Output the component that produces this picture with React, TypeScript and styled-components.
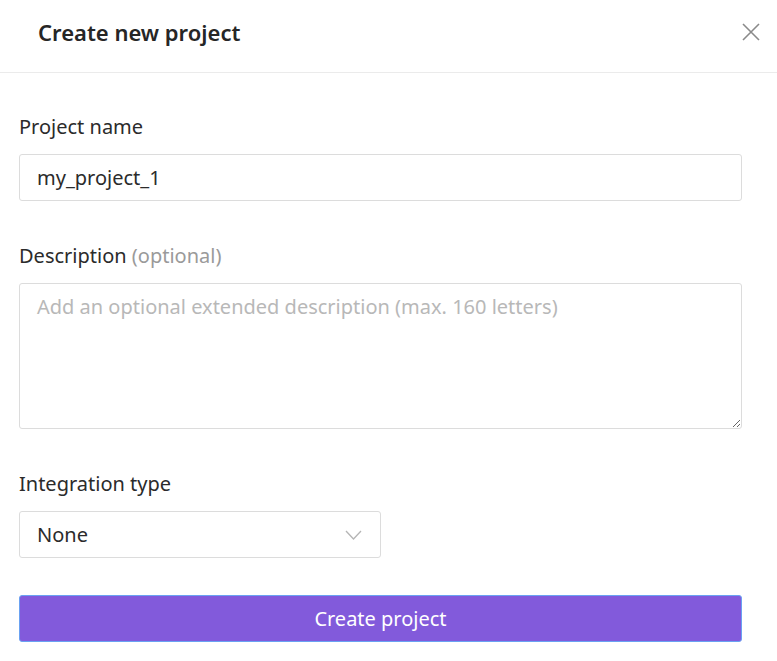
import React from "react";
import styled, { createGlobalStyle } from "styled-components";

const Global = createGlobalStyle`
  html, body { margin: 0; padding: 0; background: #fff; }
  body { font-family: "Noto Sans", "Open Sans", sans-serif; color: #2b2b2b; }
  * { box-sizing: border-box; }
`;

const Dialog = styled.div`
  width: 777px;
  background: #fff;
`;

const Header = styled.header`
  height: 73px;
  display: flex;
  align-items: center;
  justify-content: space-between;
  padding: 0 17px 8px 38px;
  border-bottom: 1px solid #ebebeb;
`;

const Title = styled.h2`
  margin: 0;
  font-size: 22px;
  font-weight: 600;
  color: #262626;
`;

const CloseButton = styled.button`
  border: none;
  background: none;
  padding: 0;
  width: 18px;
  height: 18px;
  cursor: pointer;
  display: flex;
`;

const Body = styled.div`
  padding: 40px 35px 20px 19px;
  display: flex;
  flex-direction: column;
`;

const Field = styled.div<{ $gap: number }>`
  display: flex;
  flex-direction: column;
  margin-bottom: ${(p) => p.$gap}px;
`;

const Label = styled.label`
  font-size: 20px;
  line-height: 28px;
  color: #2b2b2b;
  margin-bottom: 13px;
`;

const Optional = styled.span`
  color: #9a9a9a;
`;

const boxBase = `
  border: 1px solid #dcdcdc;
  border-radius: 3px;
  font-family: "Noto Sans", "Open Sans", sans-serif;
  font-size: 20px;
  color: #2b2b2b;
  background: #fff;
  outline: none;
`;

const TextInput = styled.input`
  ${boxBase}
  height: 47px;
  width: 100%;
  padding: 0 17px;
`;

const TextArea = styled.textarea`
  ${boxBase}
  height: 146px;
  width: 100%;
  padding: 9px 17px;
  resize: vertical;
  line-height: 28px;
  &::placeholder { color: #b8b8b8; }
`;

const Select = styled.div`
  ${boxBase}
  height: 47px;
  width: 362px;
  padding: 0 17px;
  display: flex;
  align-items: center;
  justify-content: space-between;
`;

const Chevron = styled.svg`
  width: 17px;
  height: 10px;
  margin-right: 1px;
`;

const PrimaryButton = styled.button`
  height: 47px;
  width: 100%;
  background: #825adb;
  border: 1px solid #6aa2f2;
  border-radius: 3px;
  color: #fff;
  font-family: "Noto Sans", "Open Sans", sans-serif;
  font-size: 20px;
  cursor: pointer;
`;

export default function App() {
  return (
    <>
      <Global />
      <Dialog>
        <Header>
          <Title>Create new project</Title>
          <CloseButton aria-label="Close">
            <svg width="18" height="18" viewBox="0 0 18 18">
              <path d="M1 1L17 17M17 1L1 17" stroke="#8a8a8a" strokeWidth="1.6" fill="none" />
            </svg>
          </CloseButton>
        </Header>
        <Body>
          <Field $gap={41}>
            <Label>Project name</Label>
            <TextInput defaultValue="my_project_1" />
          </Field>
          <Field $gap={41}>
            <Label>
              Description <Optional>(optional)</Optional>
            </Label>
            <TextArea placeholder="Add an optional extended description (max. 160 letters)" />
          </Field>
          <Field $gap={37}>
            <Label>Integration type</Label>
            <Select>
              <span>None</span>
              <Chevron viewBox="0 0 17 10">
                <path d="M1 1L8.5 9L16 1" stroke="#b5b5b5" strokeWidth="1.3" fill="none" />
              </Chevron>
            </Select>
          </Field>
          <PrimaryButton>Create project</PrimaryButton>
        </Body>
      </Dialog>
    </>
  );
}
